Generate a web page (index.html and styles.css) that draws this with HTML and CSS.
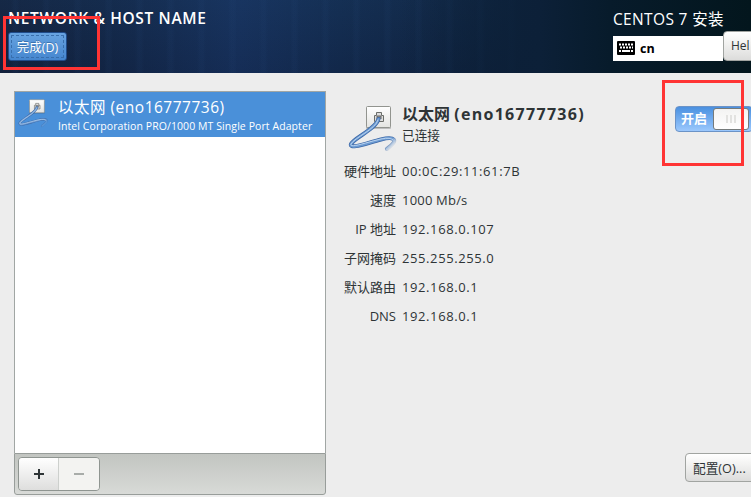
FILE: index.html
```html
<!DOCTYPE html>
<html lang="zh-CN">
<head>
<meta charset="utf-8">
<title>NETWORK &amp; HOST NAME</title>
<link rel="stylesheet" href="styles.css">
</head>
<body>
<svg class="defs" width="0" height="0" aria-hidden="true">
  <defs>
    <linearGradient id="plate" x1="0" y1="0" x2="0" y2="1"><stop offset="0" stop-color="#fff"/><stop offset="1" stop-color="#e4e4e1"/></linearGradient>
    <linearGradient id="fade" gradientUnits="userSpaceOnUse" x1="34" y1="30" x2="46" y2="42"><stop offset="0" stop-color="#fff"/><stop offset=".6" stop-color="#fff"/><stop offset="1" stop-color="#000"/></linearGradient>
    <mask id="tail"><rect width="50" height="48" fill="url(#fade)"/></mask>
    <symbol id="wired" viewBox="0 0 50 48">
      <rect x="18" y="3" width="25" height="22" rx="1" fill="#000" opacity=".2"/>
      <rect x="18.5" y="2.500" width="24" height="21" rx="1" fill="url(#plate)" stroke="#92948f"/>
      <path d="M26.5 17.500v-6h2v-3h5v3h2v6z" fill="#ddd" stroke="#6b6d69"/>
      <path d="M29 15v-3h4v3" fill="#999" stroke="#666"/>
      <g fill="none" stroke-linecap="round" stroke-linejoin="round" mask="url(#tail)">
        <path d="M30.500 15C28 25 6 34 3 40C1 46 19 39 33 35.500C46 32 52 36 39 45" stroke="#3d68a6" stroke-width="4"/>
        <path d="M30.500 15C28 25 6 34 3 40C1 46 19 39 33 35.500C46 32 52 36 39 45" stroke="#6d9bd2" stroke-width="2.600"/>
        <path d="M30 16C28 25 6 34 3 40C1 45 19 38 33 35Q43 33 45 36" stroke="#b9d3ef" stroke-width="1"/>
      </g>
    </symbol>
  </defs>
</svg>
<header class="header">
  <div class="heading">
    <h1 class="title">NETWORK &amp; HOST NAME</h1>
    <button class="done"><span>完成(D)</span></button>
  </div>
  <div class="product">
    <div class="product-name">CENTOS 7 安装</div>
    <div class="tools">
      <div class="keyboard">
        <svg width="18" height="14" viewBox="0 0 18 14"><rect width="18" height="14" rx="1" fill="#000"/><path d="M2 3.500h14M3 6.500h13" stroke="#fff" stroke-width="2" stroke-dasharray="2 1"/><path d="M2 10h2M5 10h8M14 10h2" stroke="#fff" stroke-width="2"/></svg>
        <b>cn</b>
      </div>
      <button class="button help">Hel</button>
    </div>
  </div>
</header>
<main class="main">
  <section class="devices">
    <div class="list">
      <div class="device">
        <svg class="device-icon" viewBox="0 0 50 48"><use href="#wired"/></svg>
        <div>
          <div class="device-name">以太网 (eno16777736)</div>
          <div class="device-vendor">Intel Corporation PRO/1000 MT Single Port Adapter</div>
        </div>
      </div>
    </div>
    <div class="toolbar">
      <div class="pair">
        <button class="add"><svg width="10" height="10"><path d="M0 5h10M5 0v10" stroke="#2e3436" stroke-width="2"/></svg></button>
        <button class="remove"><svg width="10" height="10"><path d="M0 5h10" stroke="#a8aca9" stroke-width="2"/></svg></button>
      </div>
    </div>
  </section>
  <section class="details">
    <div class="summary">
      <svg class="summary-icon" viewBox="0 0 50 48"><use href="#wired"/></svg>
      <div class="summary-text">
        <h2 class="summary-name">以太网 <span>(eno16777736)</span></h2>
        <div class="status">已连接</div>
      </div>
      <div class="switch"><span class="switch-label">开启</span><span class="knob"><i></i><i></i><i></i></span></div>
    </div>
    <dl class="facts">
      <dt>硬件地址</dt><dd>00:0C:29:11:61:7B</dd>
      <dt>速度</dt><dd class="speed">1000 Mb/s</dd>
      <dt>IP 地址</dt><dd>192.168.0.107</dd>
      <dt>子网掩码</dt><dd>255.255.255.0</dd>
      <dt>默认路由</dt><dd>192.168.0.1</dd>
      <dt>DNS</dt><dd>192.168.0.1</dd>
    </dl>
    <button class="button configure">配置(O)...</button>
  </section>
</main>
<div class="mark mark-done"></div>
<div class="mark mark-switch"></div>
</body>
</html>
```

FILE: styles.css
```css
* { box-sizing: border-box; }
body {
  margin: 0;
  width: 751px;
  height: 497px;
  overflow: hidden;
  position: relative;
  background: #ededed;
  color: #2e3436;
  font: 13px/18px "Open Sans", "Noto Sans CJK SC", sans-serif;
  white-space: nowrap;
}
.defs { position: absolute; }
button { font: inherit; color: inherit; margin: 0; padding: 0; }
h1, h2, dl, dd { margin: 0; }
.header {
  height: 73px;
  display: flex;
  justify-content: space-between;
  color: #fff;
  background:
    linear-gradient(90deg, transparent 400px, #0c2038 540px, #071b2b 610px, #03161d 751px),
    repeating-linear-gradient(90deg, transparent 0 11px, rgba(45, 85, 140, .07) 14px 17px, transparent 20px 31px),
    linear-gradient(rgba(25, 65, 105, .12), rgba(0, 0, 20, .12)),
    linear-gradient(90deg, #152541 0, #14294a 110px, #18335f 240px, #142d51 340px, #122847 430px, #0c2038 540px);
}
.heading { padding: 8px 0 0 8px; }
.title { font-size: 15.500px; line-height: 20px; font-weight: 600; letter-spacing: .65px; }
.done {
  display: block;
  width: 59px;
  height: 29px;
  margin-top: 4px;
  padding: 2px;
  border: 1px solid #204c8a;
  border-radius: 3px;
  background: linear-gradient(#67a3e0, #4586cf);
  color: #fff;
  font-size: 12.500px;
  text-shadow: 0 -1px #3c73b1;
}
.done span { display: block; height: 23px; line-height: 23px; border: 1px dashed #386fad; border-radius: 1px; }
.product { width: 138px; padding-top: 8px; }
.product-name { font-size: 15.500px; line-height: 22px; letter-spacing: .35px; }
.tools { display: flex; align-items: flex-start; }
.keyboard {
  flex: none;
  width: 110px;
  height: 25px;
  margin-top: 6px;
  padding-left: 4px;
  display: flex;
  align-items: center;
  gap: 5px;
  background: #fff;
  color: #000;
}
.keyboard b { font-size: 12.500px; line-height: 16px; padding-top: 1px; }
.keyboard svg { margin-bottom: 1px; }
.button {
  flex: none;
  height: 30px;
  border: 1px solid #a1a4a1;
  border-radius: 4px;
  background: linear-gradient(#fff, #f2f2f1 40%, #dcdcdb);
  color: #2e3436;
  text-align: left;
  padding-left: 7px;
}
.help { width: 48px; margin-top: 1px; font-size: 12px; }
.main { height: 424px; padding: 18px 0 0 14px; display: flex; }
.devices { width: 312px; }
.list { height: 362px; border: 1px solid #a1a6a4; border-bottom: 0; background: #fff; }
.device { height: 45px; display: flex; background: #4a90d9; color: #fff; }
.device-icon { width: 31px; height: 30px; margin: 6px 9px 0 3px; }
.device-name { font-size: 15.500px; line-height: 20px; margin-top: 5px; letter-spacing: .5px; }
.device-vendor { font-size: 10.500px; line-height: 15px; margin-top: 2px; letter-spacing: .08px; }
.toolbar {
  height: 42px;
  padding: 3px;
  border: 1px solid #989d9a;
  border-radius: 0 0 3px 3px;
  background: linear-gradient(#c2c5c1, #d8dad7);
}
.pair { width: 82px; height: 34px; display: flex; border: 1px solid #8f9591; border-radius: 4px; overflow: hidden; }
.pair button { width: 40px; border: 0; display: flex; align-items: center; justify-content: center; }
.pair .add { background: linear-gradient(#fff, #dededd); border-right: 1px solid #cdd0cd; }
.pair .remove { background: #f3f3f1; }
.details { flex: 1; min-width: 0; padding-left: 18px; display: flex; flex-direction: column; }
.summary { display: flex; padding-top: 13px; height: 65px; }
.summary-icon { width: 50px; height: 48px; margin-left: 4px; flex: none; }
.summary-text { width: 277px; padding-left: 4px; flex: none; }
.summary-name { font-size: 16px; line-height: 22px; font-weight: 700; margin-top: -1px; }
.summary-name span { letter-spacing: 1.300px; }
.status { line-height: 20px; font-size: 12.700px; }
.switch {
  width: 78px;
  height: 26px;
  margin-top: 2px;
  flex: none;
  display: flex;
  border: 1px solid #6b93c7;
  border-radius: 4px;
  background: linear-gradient(#4a90e0, #9bc8fd);
}
.switch-label { width: 37px; padding-left: 5px; line-height: 23px; color: #fff; font-weight: 700; }
.knob {
  width: 36px;
  height: 22px;
  margin-top: 1px;
  border: 1px solid #767b7b;
  border-radius: 3px;
  background: linear-gradient(#f3f3f2, #fff);
  display: flex;
  align-items: center;
  justify-content: center;
  gap: 2px;
}
.knob i { width: 2px; height: 8px; background: #e2e2e0; }
.facts { display: grid; grid-template-columns: 52px auto; grid-auto-rows: 29px; column-gap: 6px; line-height: 30px; }
.facts dt { text-align: right; }
.facts dd { letter-spacing: .6px; }
.facts .speed { letter-spacing: .2px; }
.configure { width: 78px; height: 29px; margin: auto 0 15px 341px; font-size: 12.700px; }
.mark { position: absolute; border: 3px solid #ff3434; }
.mark-done { left: 3px; top: 16px; width: 97px; height: 54px; }
.mark-switch { left: 662px; top: 80px; width: 82px; height: 86px; }
```
